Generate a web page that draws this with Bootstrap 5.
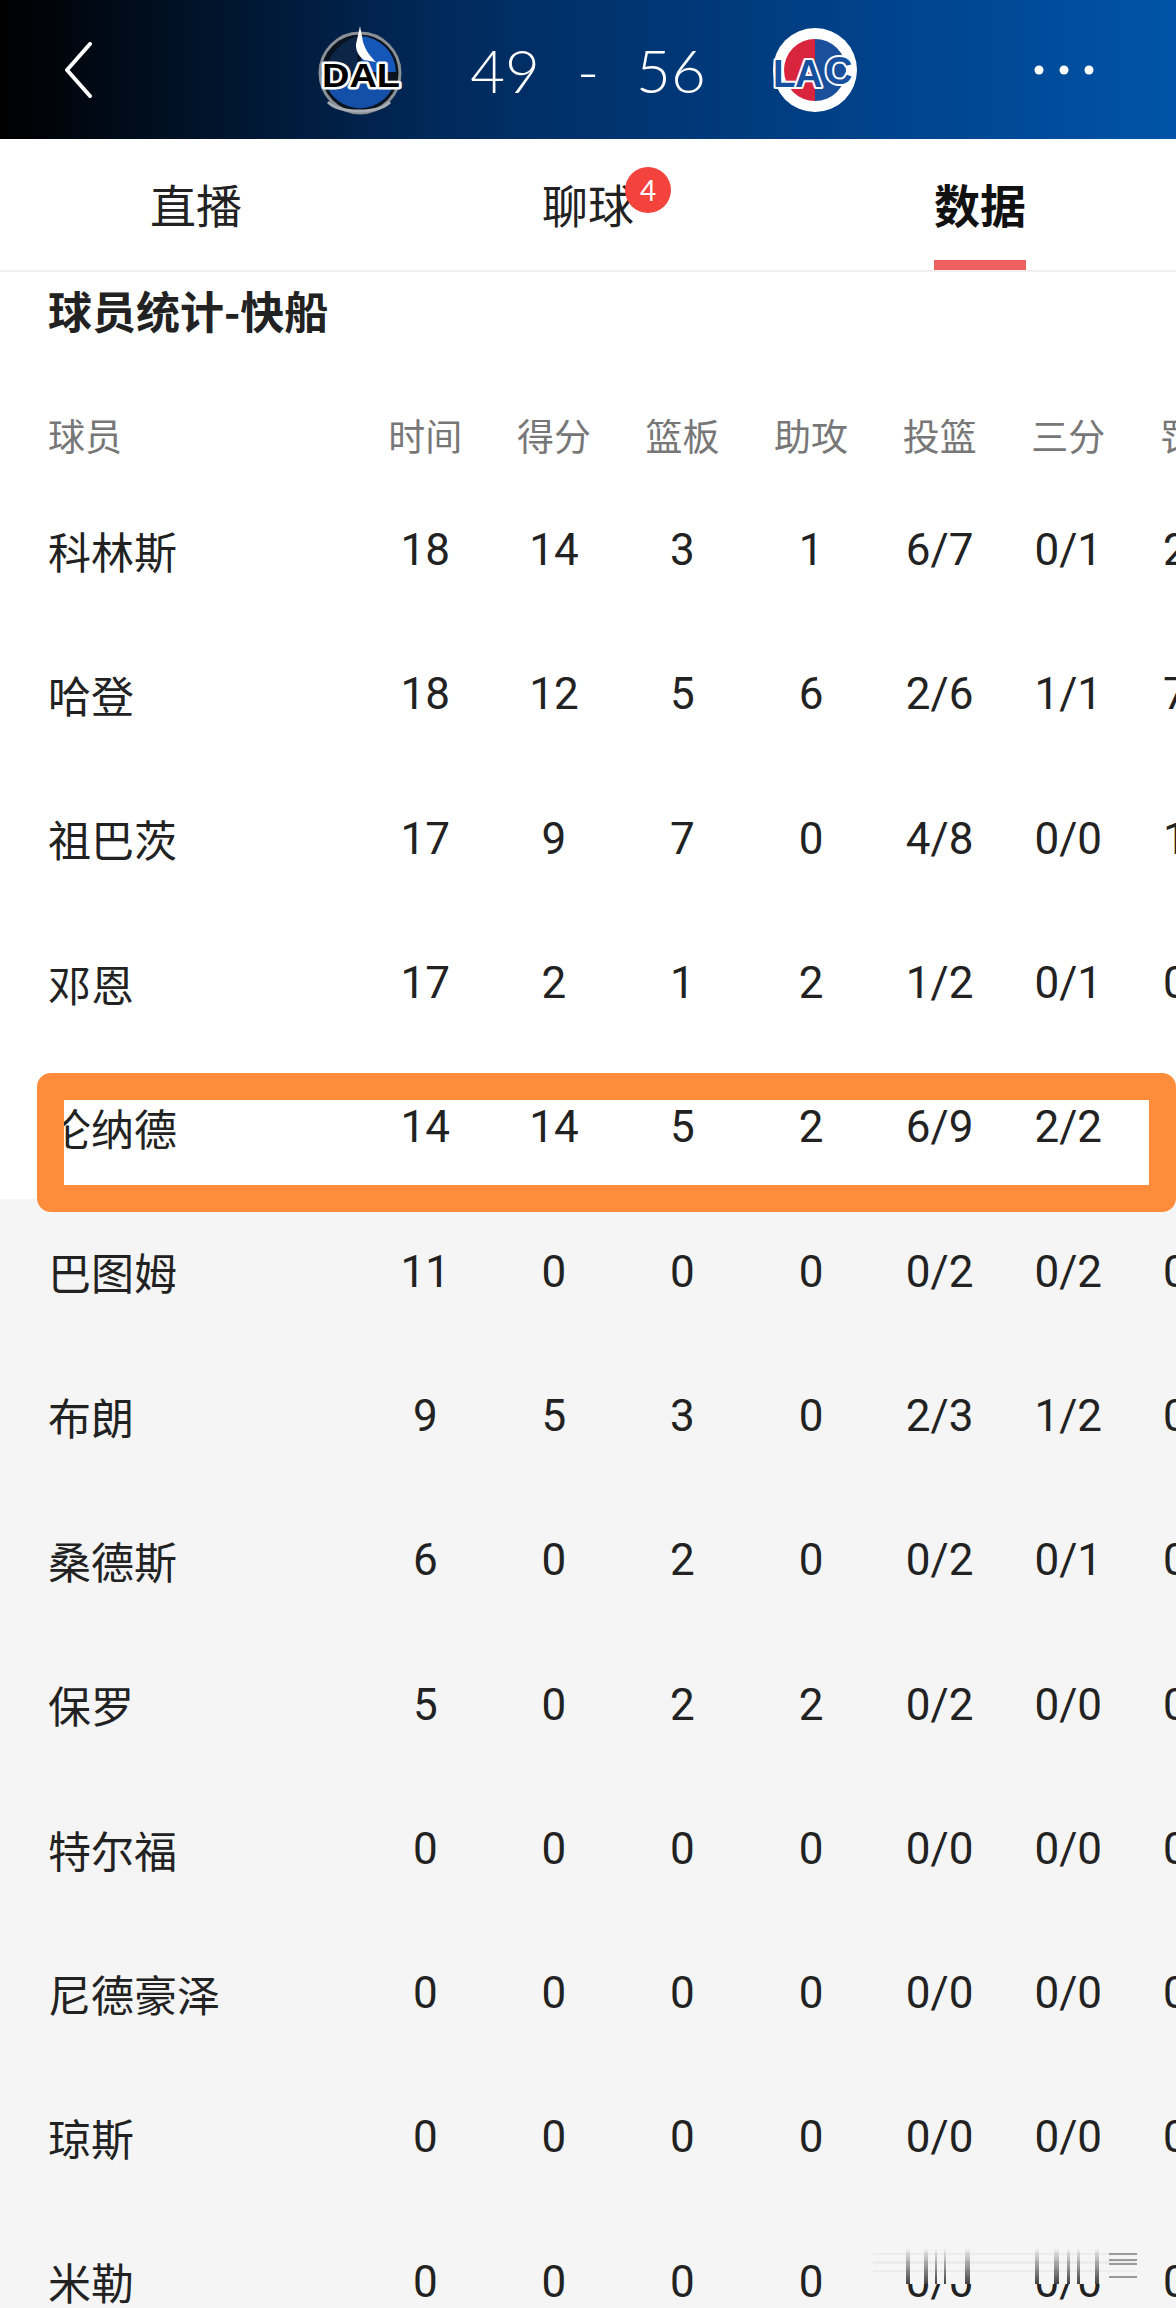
<!DOCTYPE html>
<html lang="zh-CN">
<head>
<meta charset="UTF-8">
<meta name="viewport" content="width=device-width, initial-scale=1">
<title>球员统计-快船</title>
<link href="https://cdn.jsdelivr.net/npm/bootstrap@5.3.2/dist/css/bootstrap.min.css" rel="stylesheet">
<style>
  body {
    background: #f5f5f5;
    font-family: "Noto Sans CJK SC", "Liberation Sans", sans-serif;
    color: #222;
  }
  .page-wrap {
    width: 1176px;
    height: 2308px;
    overflow: hidden;
    position: relative;
  }
  .score-bar {
    height: 139px;
    background: linear-gradient(90deg, #000 0, #012a5c 38%, #003a7c 62%, #0053a8 100%);
  }
  .bar-side {
    flex: 0 0 316px;
  }
  .score-text {
    width: 364px;
    font-family: Lato, "Liberation Sans", sans-serif;
    font-weight: 300;
    font-size: 60px;
    line-height: 1;
    color: #fff;
  }
  .score-text i {
    font-style: normal;
    margin: 0 37px;
  }
  .tab-bar {
    height: 133px;
    background: #fff;
    border-bottom: 2px solid #f0f0f0;
  }
  .tab-bar .nav-link {
    height: 131px;
    padding: 0;
    color: #222;
    font-size: 46px;
    line-height: 129px;
  }
  .tab-label {
    display: inline-block;
    position: relative;
    height: 131px;
  }
  .tab-on {
    font-weight: 700;
    color: #111;
  }
  .tab-on::after {
    content: "";
    position: absolute;
    left: 0;
    right: 0;
    bottom: 0;
    height: 10px;
    background: #ee5f5f;
  }
  .tab-count {
    position: absolute;
    left: 83px;
    top: 28px;
    width: 46px;
    height: 46px;
    border-radius: 50%;
    background: #f4433c;
    color: #fff;
    font-family: Lato, "Liberation Sans", sans-serif;
    font-size: 28px;
    line-height: 46px;
    text-align: center;
  }
  .stats-box {
    background: #fff;
    overflow: hidden;
  }
  .stats-title {
    height: 76px;
    padding-left: 48px;
    font-size: 44px;
    font-weight: 700;
    line-height: 76px;
    margin: 0 0 46px;
    color: #222;
  }
  .stats-table {
    table-layout: fixed;
    width: 1261px;
    margin: 0;
    border-collapse: collapse;
  }
  .stats-table th,
  .stats-table td {
    padding: 0;
    text-align: center;
    vertical-align: middle;
    white-space: nowrap;
    background: #fff;
    overflow: visible;
  }
  .stats-table th {
    height: 84px;
    font-size: 37px;
    font-weight: 400;
    color: #777;
  }
  .stats-table td {
    height: 144.3px;
    font-family: Roboto, "Liberation Sans", sans-serif;
    font-size: 44px;
    color: #222;
  }
  .stats-table th:first-child,
  .stats-table td:first-child {
    padding-left: 48px;
    text-align: left;
  }
  .stats-table td:first-child {
    font-family: "Noto Sans CJK SC", sans-serif;
    font-size: 43px;
  }
  .stats-table .row-grey td {
    background: #f5f5f5;
  }
  .col-name { width: 361px; }
  .col-num { width: 128.6px; }
  .pick-frame {
    position: absolute;
    left: 37px;
    top: 1073px;
    width: 1139px;
    height: 139px;
    border: solid #ff8c3a;
    border-width: 27px;
    border-radius: 14px;
  }
  .pick-frame::after {
    content: "";
    position: absolute;
    inset: 0;
    box-shadow: 0 0 0 1px #ff8c3a;
  }
  .smear {
    position: absolute;
    left: 873px;
    top: 2248px;
    width: 276px;
    height: 36px;
  }
</style>
</head>
<body>

<div class="page-wrap">

  <div class="score-bar d-flex align-items-center">
    <div class="bar-side d-flex align-items-center">
      <svg class="ms-auto me-auto" style="margin-left:64px!important" width="28" height="56" viewBox="0 0 28 56" fill="none">
        <path d="M26 2 L3 28 L26 54" stroke="#fff" stroke-width="4" stroke-linecap="round" stroke-linejoin="round"/>
      </svg>
    </div>

    <svg width="90" height="96" viewBox="0 0 90 96">
      <circle cx="44" cy="51" r="40" fill="#0a1420" stroke="#8b9096" stroke-width="3"/>
      <path d="M44 14 A37 37 0 0 1 80 50 L46 50 Z" fill="#1557b8"/>
      <path d="M10 62 A36 36 0 0 0 78 62 Z" fill="#1450a8"/>
      <path d="M12 40 C20 24 32 16 44 14 L40 50 L12 50 Z" fill="#0d2547"/>
      <path d="M12 80 C24 92 62 92 74 80" fill="none" stroke="#a8adb3" stroke-width="3"/>
      <path d="M44 4 L47 20 C50 30 56 36 60 40 L48 38 C42 34 38 26 41 18 Z" fill="#fff"/>
      <text x="45" y="65" text-anchor="middle" font-family="Liberation Sans, sans-serif" font-weight="700" font-size="33" textLength="78" lengthAdjust="spacingAndGlyphs" fill="#000" stroke="#fff" stroke-width="5" paint-order="stroke" stroke-linejoin="round">DAL</text>
    </svg>

    <div class="score-text d-flex justify-content-center align-items-center">
      <span>49</span><i>-</i><span>56</span>
    </div>

    <svg width="90" height="96" viewBox="0 0 90 96">
      <circle cx="45" cy="48" r="42" fill="#fff"/>
      <path d="M45 17 A31 31 0 0 0 45 79 Z" fill="#d8243c"/>
      <path d="M45 17 A31 31 0 0 1 45 79 Z" fill="#1a4f9c"/>
      <g font-family="Liberation Sans, sans-serif" font-weight="700" fill="#17509f" stroke="#fff" stroke-width="4" paint-order="stroke" stroke-linejoin="round">
        <text x="3" y="65" font-size="38">L</text>
        <text x="25" y="65" font-size="38">A</text>
        <text x="55" y="62" font-size="38">C</text>
      </g>
    </svg>

    <div class="bar-side d-flex justify-content-end align-items-center">
      <svg class="me-5" style="margin-right:82px!important" width="60" height="10" viewBox="0 0 60 10" fill="#fff">
        <circle cx="5" cy="5" r="4.5"/><circle cx="30" cy="5" r="4.5"/><circle cx="55" cy="5" r="4.5"/>
      </svg>
    </div>
  </div>

  <nav class="tab-bar nav nav-fill">
    <a class="nav-link" href="#"><span class="tab-label">直播</span></a>
    <a class="nav-link" href="#"><span class="tab-label">聊球<span class="tab-count">4</span></span></a>
    <a class="nav-link" href="#"><span class="tab-label tab-on">数据</span></a>
  </nav>

  <div class="stats-box">
    <h5 class="stats-title">球员统计-快船</h5>
    <table class="table table-borderless stats-table">
      <colgroup>
        <col class="col-name"><col class="col-num"><col class="col-num"><col class="col-num"><col class="col-num"><col class="col-num"><col class="col-num"><col class="col-num">
      </colgroup>
      <thead>
        <tr><th>球员</th><th>时间</th><th>得分</th><th>篮板</th><th>助攻</th><th>投篮</th><th>三分</th><th>罚球</th></tr>
      </thead>
      <tbody>
        <tr><td>科林斯</td><td>18</td><td>14</td><td>3</td><td>1</td><td>6/7</td><td>0/1</td><td>2/2</td></tr>
        <tr><td>哈登</td><td>18</td><td>12</td><td>5</td><td>6</td><td>2/6</td><td>1/1</td><td>7/8</td></tr>
        <tr><td>祖巴茨</td><td>17</td><td>9</td><td>7</td><td>0</td><td>4/8</td><td>0/0</td><td>1/2</td></tr>
        <tr><td>邓恩</td><td>17</td><td>2</td><td>1</td><td>2</td><td>1/2</td><td>0/1</td><td>0/0</td></tr>
        <tr><td>伦纳德</td><td>14</td><td>14</td><td>5</td><td>2</td><td>6/9</td><td>2/2</td><td>0/0</td></tr>
        <tr class="row-grey"><td>巴图姆</td><td>11</td><td>0</td><td>0</td><td>0</td><td>0/2</td><td>0/2</td><td>0/0</td></tr>
        <tr class="row-grey"><td>布朗</td><td>9</td><td>5</td><td>3</td><td>0</td><td>2/3</td><td>1/2</td><td>0/0</td></tr>
        <tr class="row-grey"><td>桑德斯</td><td>6</td><td>0</td><td>2</td><td>0</td><td>0/2</td><td>0/1</td><td>0/0</td></tr>
        <tr class="row-grey"><td>保罗</td><td>5</td><td>0</td><td>2</td><td>2</td><td>0/2</td><td>0/0</td><td>0/0</td></tr>
        <tr class="row-grey"><td>特尔福</td><td>0</td><td>0</td><td>0</td><td>0</td><td>0/0</td><td>0/0</td><td>0/0</td></tr>
        <tr class="row-grey"><td>尼德豪泽</td><td>0</td><td>0</td><td>0</td><td>0</td><td>0/0</td><td>0/0</td><td>0/0</td></tr>
        <tr class="row-grey"><td>琼斯</td><td>0</td><td>0</td><td>0</td><td>0</td><td>0/0</td><td>0/0</td><td>0/0</td></tr>
        <tr class="row-grey"><td>米勒</td><td>0</td><td>0</td><td>0</td><td>0</td><td>0/0</td><td>0/0</td><td>0/0</td></tr>
      </tbody>
    </table>
  </div>

  <!-- orange marker drawn over the 5th row -->
  <div class="pick-frame"></div>

  <!-- smeared patch over the last row, the screenshot has it too -->
  <svg class="smear" viewBox="0 0 276 36">
    <defs>
      <linearGradient id="fadeUp" x1="0" y1="0" x2="0" y2="1">
        <stop offset="0" stop-color="#222" stop-opacity="0"/>
        <stop offset="1" stop-color="#222" stop-opacity=".85"/>
      </linearGradient>
    </defs>
    <rect width="276" height="36" fill="#f5f5f5"/>
    <g fill="#e9e9e9" opacity=".7">
      <rect y="5" width="262" height="2"/><rect y="13" width="262" height="3"/><rect y="22" width="262" height="2"/>
    </g>
    <g fill="url(#fadeUp)">
      <rect x="33" width="4" height="36"/><rect x="51" width="4" height="36"/><rect x="62" width="2" height="36"/>
      <rect x="71" width="2" height="36"/><rect x="92" width="5" height="36"/><rect x="162" width="4" height="36"/>
      <rect x="181" width="5" height="36"/><rect x="194" width="3" height="36"/><rect x="204" width="3" height="36"/><rect x="222" width="4" height="36"/>
    </g>
    <g fill="#9a9a9a">
      <rect x="236" y="5" width="28" height="2"/><rect x="236" y="11" width="28" height="2"/><rect x="236" y="15" width="28" height="2"/><rect x="236" y="28" width="28" height="2"/>
    </g>
  </svg>

</div>

<script src="https://cdn.jsdelivr.net/npm/bootstrap@5.3.2/dist/js/bootstrap.bundle.min.js"></script>
</body>
</html>
